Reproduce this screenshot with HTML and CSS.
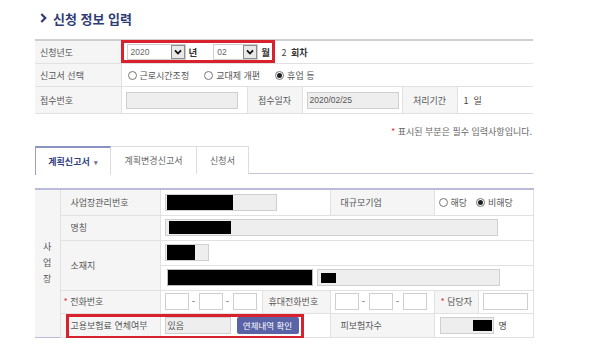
FILE: index.html
```html
<!DOCTYPE html>
<html lang="ko">
<head>
<meta charset="utf-8">
<title>신청 정보 입력</title>
<link rel="stylesheet" href="styles.css">
</head>
<body>
<div class="page">
  <h1 class="title"><svg viewBox="0 0 7 10" class="chev"><polyline points="1.3,1 5.3,5 1.3,9" fill="none" stroke="#2e3b74" stroke-width="2.2"/></svg>신청 정보 입력</h1>

  <table class="info">
    <colgroup><col class="w86"><col class="w126"><col class="w55"><col class="w100"><col class="w55"><col class="w76"></colgroup>
    <tr class="r1">
      <td class="lab">신청년도</td>
      <td colspan="5" class="val0">
        <div class="ymrow">
          <div class="ym">
            <span class="sel s1"><span class="sv">2020</span><span class="sb"><svg viewBox="0 0 10 10"><polyline points="2,3.3 5,6.5 8,3.3" fill="none" stroke="#111" stroke-width="1.8"/></svg></span></span>
            <b class="unit">년</b>
            <span class="sel s2"><span class="sv">02</span><span class="sb"><svg viewBox="0 0 10 10"><polyline points="2,3.3 5,6.5 8,3.3" fill="none" stroke="#111" stroke-width="1.8"/></svg></span></span>
            <b class="unit">월</b>
          </div>
          <span class="cnt">2 <b>회차</b></span>
        </div>
      </td>
    </tr>
    <tr class="r2">
      <td class="lab">신고서 선택</td>
      <td colspan="5" class="val">
        <div class="radios">
          <span class="rd"><span class="dot"></span>근로시간조정</span>
          <span class="rd"><span class="dot"></span>교대제 개편</span>
          <span class="rd"><span class="dot on"></span>휴업 등</span>
        </div>
      </td>
    </tr>
    <tr class="r3">
      <td class="lab">접수번호</td>
      <td class="val"><span class="fld ro w112"></span></td>
      <td class="lab mid">접수일자</td>
      <td class="val"><span class="fld ro w92">2020/02/25</span></td>
      <td class="lab mid">처리기간</td>
      <td class="val days">1 &nbsp;일</td>
    </tr>
  </table>

  <p class="note"><span class="req">*</span> 표시된 부분은 필수 입력사항입니다.</p>

  <div class="tabs">
    <div class="tab active t1">계획신고서 <span class="caret">▾</span></div>
    <div class="tab t2">계획변경신고서</div>
    <div class="tab t3">신청서</div>
  </div>

  <div class="mainwrap">
    <table class="main">
      <colgroup><col class="w25"><col class="w100"><col class="w102"><col class="w68"><col class="w104"><col class="w44"><col class="w55"></colgroup>
      <tr class="ra">
        <td rowspan="6" class="vlab"><span>사</span><span>업</span><span>장</span></td>
        <td class="lab pl">사업장관리번호</td>
        <td colspan="2" class="val"><span class="fld ro w112"><span class="blk b66"></span></span></td>
        <td class="lab pl">대규모기업</td>
        <td colspan="2" class="val">
          <div class="radios sm">
            <span class="rd"><span class="dot"></span>해당</span>
            <span class="rd"><span class="dot on"></span>비해당</span>
          </div>
        </td>
      </tr>
      <tr class="rb">
        <td class="lab pl">명칭</td>
        <td colspan="5" class="val"><span class="fld ro w333"><span class="blk b62 short"></span></span></td>
      </tr>
      <tr class="rc">
        <td rowspan="2" class="lab pl">소재지</td>
        <td colspan="5" class="val"><span class="fld ro w44"><span class="blk b28"></span></span></td>
      </tr>
      <tr class="rc">
        <td colspan="5" class="val">
          <div class="addr">
            <span class="fld dark w144"></span>
            <span class="fld ro w183"><span class="blk b15 tiny"></span></span>
          </div>
        </td>
      </tr>
      <tr class="rd2">
        <td class="lab pl tight"><span class="req">*</span> 전화번호</td>
        <td class="val">
          <div class="phone"><span class="fld box"></span><span class="dash">-</span><span class="fld box"></span><span class="dash">-</span><span class="fld box"></span></div>
        </td>
        <td class="lab ps">휴대전화번호</td>
        <td class="val">
          <div class="phone"><span class="fld box"></span><span class="dash">-</span><span class="fld box"></span><span class="dash">-</span><span class="fld box"></span></div>
        </td>
        <td class="lab ps"><span class="req">*</span> 담당자</td>
        <td class="val"><span class="fld w45"></span></td>
      </tr>
      <tr class="re">
        <td class="lab pl">고용보험료 연체여부</td>
        <td colspan="2" class="val">
          <div class="arrears"><span class="fld ro w65">있음</span><span class="btn">연체내역 확인</span></div>
        </td>
        <td class="lab pl">피보험자수</td>
        <td colspan="2" class="val"><div class="cntrow"><span class="fld ro w54"><span class="blk b19"></span></span><span>명</span></div></td>
      </tr>
    </table>
    <div class="redmark"></div>
  </div>
</div>
</body>
</html>
```

FILE: styles.css
```css
* { box-sizing: border-box; }
html, body { margin: 0; background: #fff; }
body {
  font-family: "Noto Sans CJK KR", "Noto Sans", sans-serif;
  font-size: 9px;
  color: #555;
}
.page {
  width: 498px;
  margin-left: 35px;
  padding-top: 8px;
}
.title {
  margin: 0 0 11px;
  height: 20px;
  display: flex;
  align-items: center;
  gap: 6px;
  padding-left: 5px;
  font-size: 13px;
  font-weight: 700;
  color: #2e3b74;
}
.chev { width: 7px; height: 10px; }

table { border-collapse: collapse; table-layout: fixed; width: 498px; }
td { padding: 0; vertical-align: middle; border-bottom: 1px solid #e1e1e1; white-space: nowrap; }

.w86 { width: 86px; } .w126 { width: 126px; } .w55 { width: 55px; } .w100 { width: 100px; } .w76 { width: 76px; }
.w25 { width: 25px; } .w102 { width: 102px; } .w68 { width: 68px; } .w104 { width: 104px; } .w44c { width: 44px; }

.info { border-top: 2px solid #cfcfcf; }
.info .r1 td { height: 23px; }
.info .r2 td { height: 23px; }
.info .r3 td { height: 27px; }
.lab { background: #f5f5f5; padding-left: 5px; color: #555; border-right: 1px solid #e1e1e1; }
.lab.mid { text-align: center; padding-left: 0; border-left: 1px solid #e1e1e1; }
.val { padding-left: 4px; color: #444; }
.val0 { padding: 0; }
.days { padding-left: 6px; }

.ymrow { display: flex; align-items: center; }
.ym {
  display: flex; align-items: center;
  width: 154px; height: 23px;
  margin-left: -1px; margin-top: -1px;
  border: 3px solid #d8212c;
  padding-left: 3px;
}
.sel {
  display: flex; align-items: center; justify-content: space-between;
  height: 16px; border: 1px solid #cfcfcf; background: #fff;
  padding-left: 3px; color: #666; font-family: "Liberation Sans", sans-serif; font-size: 8.5px;
}
.s1 { width: 59px; }
.s2 { width: 45px; margin-left: 16px; }
.sb {
  width: 14px; height: 14px; border: 1px solid #8c8c8c; background: #e9e9e9;
  display: flex; align-items: center; justify-content: center;
}
.sb svg { width: 10px; height: 10px; }
.unit { margin-left: 3px; color: #333; font-size: 9.5px; }
.cnt { margin-left: 7px; color: #444; }
.cnt b { color: #333; margin-left: 2px; }

.radios { display: flex; align-items: center; gap: 15px; }
.rd { display: inline-flex; align-items: center; gap: 3px; color: #555; }
.dot {
  width: 9px; height: 9px; border: 1px solid #777; border-radius: 50%; background: #fff;
  display: inline-flex; align-items: center; justify-content: center;
}
.dot.on::after { content: ""; width: 5px; height: 5px; border-radius: 50%; background: #222; }
.info .radios { padding-left: 2px; gap: 15px; }
.radios.sm { gap: 9px; padding-left: 0; }

.fld {
  display: inline-flex; align-items: center; vertical-align: middle;
  height: 17px; border: 1px solid #cfcfcf; background: #fff; padding-left: 2px;
  color: #555; font-family: "Liberation Sans", "Noto Sans CJK KR", sans-serif; font-size: 8.5px;
}
.fld.ro { background: #eeeeee; }
.fld.dark { background: #000; border-color: #bbb; }
.w112 { width: 112px; } .w92 { width: 92px; } .w333 { width: 333px; } .w44 { width: 44px; }
.w144 { width: 146px; } .w183 { width: 183px; } .w45 { width: 45px; } .w65 { width: 66px; } .w54 { width: 54px; }
.fld.w65 { font-family: "Noto Sans CJK KR", sans-serif; font-size: 9px; }
.blk { display: block; background: #000; height: 15px; margin-left: -1px; }
.b66 { width: 66px; } .b62 { width: 62px; } .b28 { width: 28px; } .b15 { width: 15px; } .b19 { width: 19px; }
.blk.short { height: 13px; margin-left: 1px; }
.blk.tiny { height: 10px; margin-left: 1px; }
.fld.w54 { justify-content: flex-end; padding-right: 0; }
.fld.w54 .blk { height: 11px; margin-right: 1px; }

.note { margin: 12px 0 8px; height: 12px; line-height: 12px; text-align: right; color: #666; padding-right: 1px; }
.req { color: #e2323c; }

.tabs { display: flex; height: 28px; border-bottom: 1px solid #c3c6da; margin-bottom: 14px; }
.tab {
  display: flex; align-items: center; justify-content: center;
  height: 28px; border: 1px solid #dcdcdc; border-bottom: none; border-left: none;
  color: #666; background: #fff;
}
.tab.t1 { width: 76px; border-left: 1px solid #9aa1c8; border-top: 2px solid #8a93c3; border-right: 1px solid #dcdcdc; height: 29px; margin-bottom: -1px; color: #34427e; font-weight: 700; }
.caret { font-size: 7px; margin-left: 4px; color: #6a73a3; }
.tab.t2 { width: 86px; }
.tab.t3 { width: 52px; }

.mainwrap { position: relative; }
.main { border-top: 2px solid #b8bcd8; border-bottom: 1px solid #b8bcd8; }
.main td { border-right: 1px solid #e1e1e1; }
.main .ra td { height: 26px; }
.main .rb td { height: 25px; }
.main .rc td { height: 25px; }
.main .rd2 td { height: 23px; }
.main .re td { height: 24px; }
.vlab { background: #f5f5f5; text-align: center; color: #555; border-bottom: none !important; }
.vlab span { display: block; line-height: 16px; }
.lab.pl { padding-left: 10px; }
.lab.tight { padding-left: 3px; }
.lab.ps { padding-left: 6px; border-left: 1px solid #e1e1e1; }
.main .val { padding-left: 4px; }
.addr { display: flex; align-items: center; gap: 4px; padding-left: 2px; }
.phone { display: flex; align-items: center; }
.fld.box { width: 24px; }
.dash { width: 10px; text-align: center; color: #888; font-weight: 700; }
.arrears { display: flex; align-items: center; gap: 6px; }
.btn {
  display: inline-flex; align-items: center; justify-content: center;
  width: 62px; height: 17px; border-radius: 2px;
  background: #5963a6; color: #fff; font-size: 8.5px;
}
.cntrow { display: flex; align-items: center; gap: 5px; padding-left: 1px; }
.redmark {
  position: absolute; left: 31px; top: 126px; width: 238px; height: 25px;
  border: 3px solid #d8212c;
}
```
